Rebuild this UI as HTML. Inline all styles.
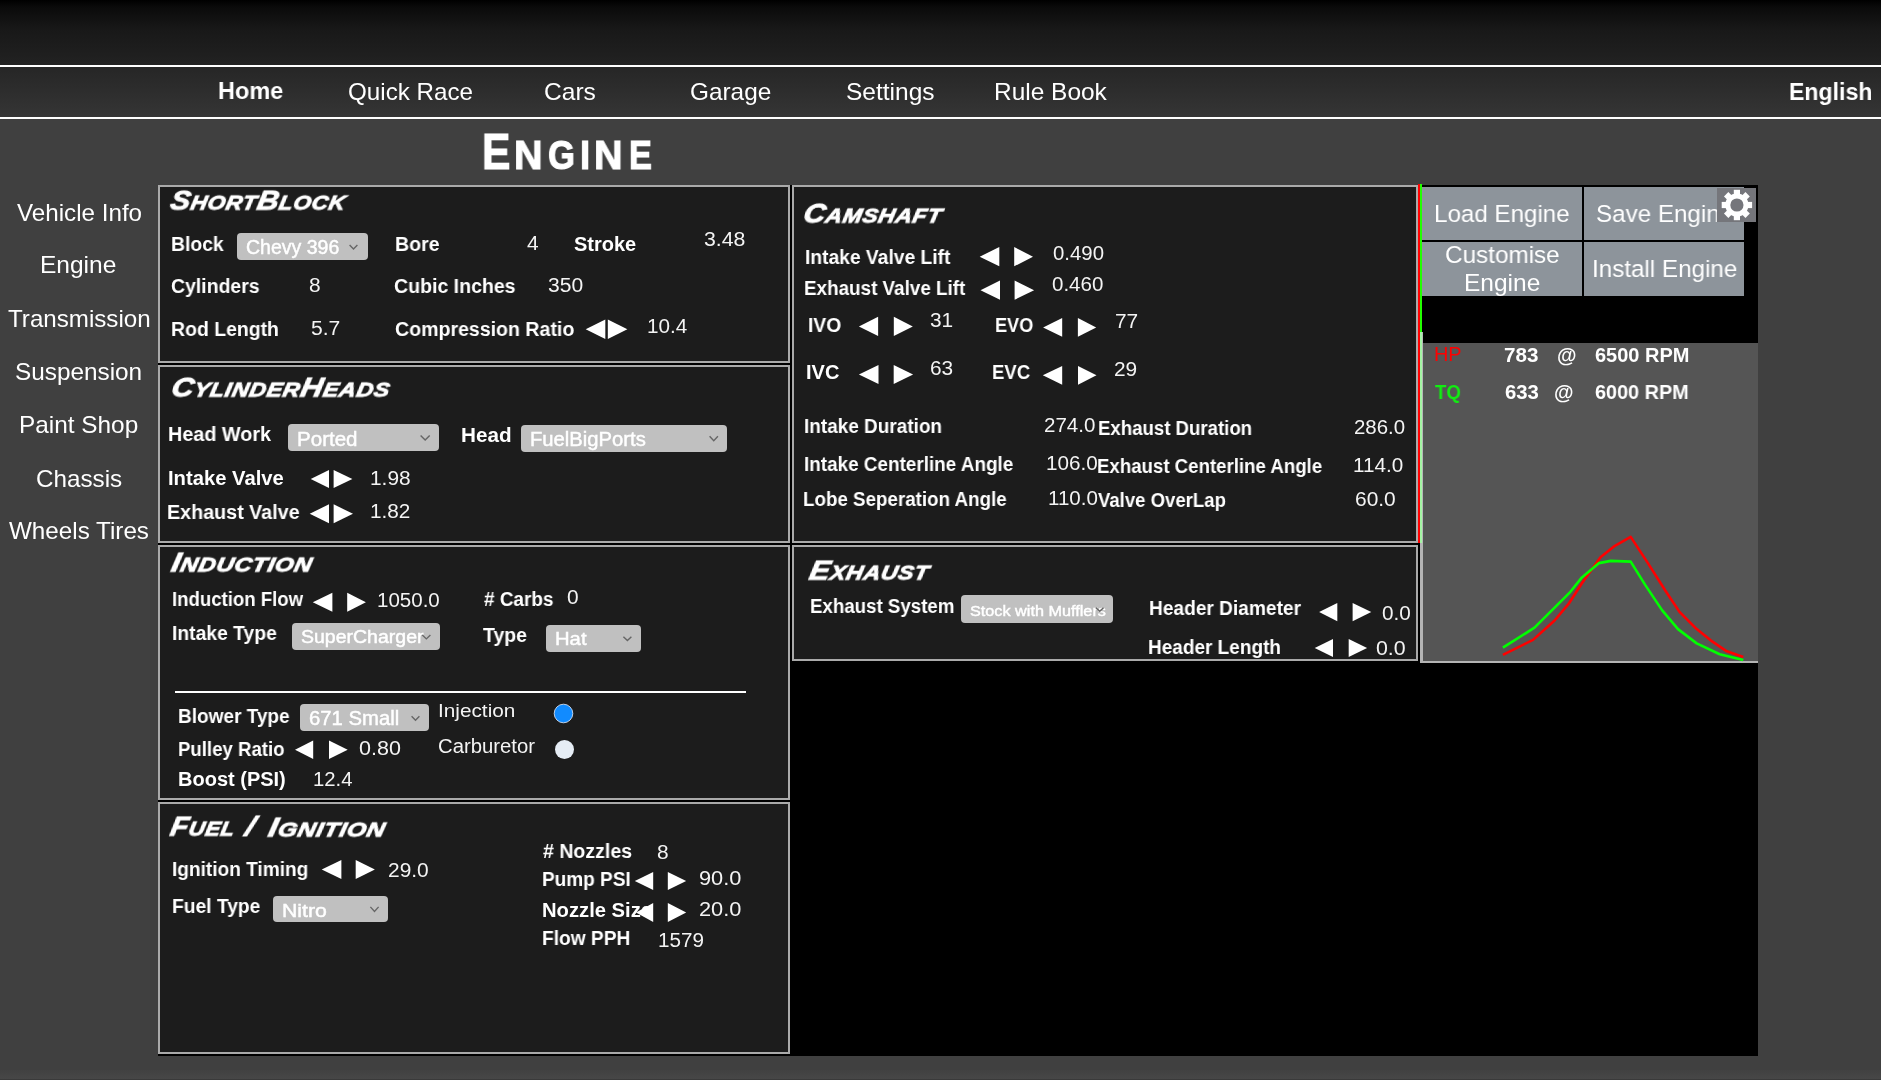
<!DOCTYPE html><html><head><meta charset="utf-8"><style>html,body{margin:0;padding:0;width:1881px;height:1080px;overflow:hidden;background:#404040;}body{position:relative;font-family:'Liberation Sans', sans-serif;}div{box-sizing:border-box;}.t{will-change:transform;white-space:nowrap;position:absolute;}</style></head><body>
<div style="position:absolute;left:0px;top:0px;width:1881px;height:65px;background:linear-gradient(#000000 0%, #0b0b0b 12%, #181818 45%, #222222 100%);"></div>
<div style="position:absolute;left:0px;top:65px;width:1881px;height:2px;background:#ffffff;"></div>
<div style="position:absolute;left:0px;top:67px;width:1881px;height:50px;background:linear-gradient(#262626, #353535);"></div>
<div style="position:absolute;left:0px;top:117px;width:1881px;height:2px;background:#ffffff;"></div>
<div style="position:absolute;left:0px;top:119px;width:1881px;height:961px;background:#404040;"></div>
<div style="position:absolute;left:0px;top:1070px;width:1881px;height:9px;background:linear-gradient(#414141,#474747);"></div>
<div style="position:absolute;left:0px;top:1079px;width:1881px;height:1px;background:#3a3a3a;"></div>
<div style="position:absolute;left:158px;top:185px;width:1600px;height:871px;background:#000000;"></div>
<div style="position:absolute;left:158px;top:185px;width:632px;height:178px;background:#1c1c1c;border:2px solid #aaaaaa;"></div>
<div style="position:absolute;left:158px;top:365px;width:632px;height:178px;background:#1c1c1c;border:2px solid #aaaaaa;"></div>
<div style="position:absolute;left:158px;top:545px;width:632px;height:255px;background:#1c1c1c;border:2px solid #aaaaaa;"></div>
<div style="position:absolute;left:158px;top:802px;width:632px;height:252px;background:#1c1c1c;border:2px solid #aaaaaa;"></div>
<div style="position:absolute;left:792px;top:185px;width:626px;height:358px;background:#1c1c1c;border:2px solid #aaaaaa;"></div>
<div style="position:absolute;left:792px;top:545px;width:626px;height:116px;background:#1c1c1c;border:2px solid #aaaaaa;"></div>
<div style="position:absolute;left:1418px;top:184px;width:2px;height:359px;background:#ff0000;"></div>
<div style="position:absolute;left:1420px;top:184px;width:2px;height:148px;background:#22ff00;"></div>
<div style="position:absolute;left:1420px;top:332px;width:2px;height:211px;background:#a4f5a4;"></div>
<div style="position:absolute;left:1422px;top:187px;width:160px;height:53px;background:#8d949b;"></div>
<div style="position:absolute;left:1584px;top:187px;width:160px;height:53px;background:#8d949b;"></div>
<div style="position:absolute;left:1422px;top:242px;width:160px;height:54px;background:#8d949b;"></div>
<div style="position:absolute;left:1584px;top:242px;width:160px;height:54px;background:#8d949b;"></div>
<div style="position:absolute;left:1423px;top:343px;width:335px;height:318px;background:#555555;"></div>
<div style="position:absolute;left:1422px;top:332px;width:1px;height:211px;background:#b8b8b8;"></div>
<div style="position:absolute;left:1420px;top:543px;width:3px;height:120px;background:#b4b4b4;"></div>
<div style="position:absolute;left:1420px;top:661px;width:338px;height:2px;background:#b4b4b4;"></div>
<div style="position:absolute;left:237px;top:233px;width:131px;height:27px;background:#c0c0c0;border-radius:4px;"></div>
<div style="position:absolute;left:287.8px;top:423.7px;width:151.2px;height:27.400000000000034px;background:#c0c0c0;border-radius:4px;"></div>
<div style="position:absolute;left:521.3px;top:424.7px;width:206.20000000000005px;height:27.19999999999999px;background:#c0c0c0;border-radius:4px;"></div>
<div style="position:absolute;left:292px;top:623px;width:147.89999999999998px;height:27.200000000000045px;background:#c0c0c0;border-radius:4px;"></div>
<div style="position:absolute;left:546.2px;top:624.7px;width:94.79999999999995px;height:27.199999999999932px;background:#c0c0c0;border-radius:4px;"></div>
<div style="position:absolute;left:300px;top:704.3px;width:129px;height:26.700000000000045px;background:#c0c0c0;border-radius:4px;"></div>
<div style="position:absolute;left:273.3px;top:895.6px;width:115.19999999999999px;height:26.899999999999977px;background:#c0c0c0;border-radius:4px;"></div>
<div style="position:absolute;left:961px;top:595.1px;width:152.29999999999995px;height:27.5px;background:#c0c0c0;border-radius:4px;"></div>
<div style="position:absolute;left:175px;top:691px;width:571px;height:2px;background:#ffffff;"></div>
<div class="t" style="left:217.89px;top:79.26px;font-weight:700;font-size:24.5px;line-height:24.5px;color:#ffffff;white-space:nowrap;transform-origin:0 0;transform:scaleX(0.9574)">Home</div>
<div class="t" style="left:347.85px;top:79.68px;font-weight:400;font-size:24px;line-height:24px;color:#ffffff;white-space:nowrap;transform-origin:0 0;transform:scaleX(1.0077)">Quick Race</div>
<div class="t" style="left:544.46px;top:79.68px;font-weight:400;font-size:24px;line-height:24px;color:#ffffff;white-space:nowrap;transform-origin:0 0;transform:scaleX(1.0239)">Cars</div>
<div class="t" style="left:689.78px;top:79.58px;font-weight:400;font-size:24px;line-height:24px;color:#ffffff;white-space:nowrap;transform-origin:0 0;transform:scaleX(1.0154)">Garage</div>
<div class="t" style="left:846.30px;top:79.58px;font-weight:400;font-size:24px;line-height:24px;color:#ffffff;white-space:nowrap;transform-origin:0 0;transform:scaleX(1.0205)">Settings</div>
<div class="t" style="left:993.56px;top:79.58px;font-weight:400;font-size:24px;line-height:24px;color:#ffffff;white-space:nowrap;transform-origin:0 0;transform:scaleX(1.0186)">Rule Book</div>
<div class="t" style="left:1789.21px;top:80.26px;font-weight:700;font-size:24.5px;line-height:24.5px;color:#ffffff;white-space:nowrap;transform-origin:0 0;transform:scaleX(0.9428)">English</div>
<div class="t" style="left:16.74px;top:200.78px;font-weight:400;font-size:24px;line-height:24px;color:#ffffff;white-space:nowrap;transform-origin:0 0;transform:scaleX(1.0078)">Vehicle Info</div>
<div class="t" style="left:40.16px;top:253.38px;font-weight:400;font-size:24px;line-height:24px;color:#ffffff;white-space:nowrap;transform-origin:0 0;transform:scaleX(1.0210)">Engine</div>
<div class="t" style="left:7.61px;top:306.68px;font-weight:400;font-size:24px;line-height:24px;color:#ffffff;white-space:nowrap;transform-origin:0 0;transform:scaleX(1.0059)">Transmission</div>
<div class="t" style="left:15.00px;top:359.68px;font-weight:400;font-size:24px;line-height:24px;color:#ffffff;white-space:nowrap;transform-origin:0 0;transform:scaleX(1.0135)">Suspension</div>
<div class="t" style="left:18.67px;top:413.38px;font-weight:400;font-size:24px;line-height:24px;color:#ffffff;white-space:nowrap;transform-origin:0 0;transform:scaleX(1.0151)">Paint Shop</div>
<div class="t" style="left:35.58px;top:466.68px;font-weight:400;font-size:24px;line-height:24px;color:#ffffff;white-space:nowrap;transform-origin:0 0;transform:scaleX(1.0088)">Chassis</div>
<div class="t" style="left:8.78px;top:519.48px;font-weight:400;font-size:24px;line-height:24px;color:#ffffff;white-space:nowrap;transform-origin:0 0;transform:scaleX(1.0092)">Wheels Tires</div>
<div class="t" style="left:171.04px;top:233.57px;font-weight:700;font-size:20px;line-height:20px;color:#ffffff;white-space:nowrap;transform-origin:0 0;transform:scaleX(0.9681)">Block</div>
<div class="t" style="left:394.73px;top:233.57px;font-weight:700;font-size:20px;line-height:20px;color:#ffffff;white-space:nowrap;transform-origin:0 0;transform:scaleX(0.9772)">Bore</div>
<div class="t" style="left:573.78px;top:233.57px;font-weight:700;font-size:20px;line-height:20px;color:#ffffff;white-space:nowrap;transform-origin:0 0;transform:scaleX(0.9950)">Stroke</div>
<div class="t" style="left:171.33px;top:275.57px;font-weight:700;font-size:20px;line-height:20px;color:#ffffff;white-space:nowrap;transform-origin:0 0;transform:scaleX(0.9719)">Cylinders</div>
<div class="t" style="left:394.22px;top:275.57px;font-weight:700;font-size:20px;line-height:20px;color:#ffffff;white-space:nowrap;transform-origin:0 0;transform:scaleX(0.9767)">Cubic Inches</div>
<div class="t" style="left:171.04px;top:318.67px;font-weight:700;font-size:20px;line-height:20px;color:#ffffff;white-space:nowrap;transform-origin:0 0;transform:scaleX(0.9717)">Rod Length</div>
<div class="t" style="left:395.02px;top:319.47px;font-weight:700;font-size:20px;line-height:20px;color:#ffffff;white-space:nowrap;transform-origin:0 0;transform:scaleX(0.9780)">Compression Ratio</div>
<div class="t" style="left:527.28px;top:233.99px;font-weight:400;font-size:19.5px;line-height:19.5px;color:#f4f4f4;white-space:nowrap;transform-origin:0 0;transform:scaleX(1.0700)">4</div>
<div class="t" style="left:704.33px;top:229.69px;font-weight:400;font-size:19.5px;line-height:19.5px;color:#f4f4f4;white-space:nowrap;transform-origin:0 0;transform:scaleX(1.0904)">3.48</div>
<div class="t" style="left:309.03px;top:275.99px;font-weight:400;font-size:19.5px;line-height:19.5px;color:#f4f4f4;white-space:nowrap;transform-origin:0 0;transform:scaleX(1.0700)">8</div>
<div class="t" style="left:548.14px;top:275.99px;font-weight:400;font-size:19.5px;line-height:19.5px;color:#f4f4f4;white-space:nowrap;transform-origin:0 0;transform:scaleX(1.0801)">350</div>
<div class="t" style="left:310.58px;top:319.09px;font-weight:400;font-size:19.5px;line-height:19.5px;color:#f4f4f4;white-space:nowrap;transform-origin:0 0;transform:scaleX(1.0817)">5.7</div>
<div class="t" style="left:647.49px;top:316.89px;font-weight:400;font-size:19.5px;line-height:19.5px;color:#f4f4f4;white-space:nowrap;transform-origin:0 0;transform:scaleX(1.0608)">10.4</div>
<div class="t" style="left:245.95px;top:238.19px;font-weight:400;font-size:19.5px;-webkit-text-stroke:0.45px #fff;line-height:19.5px;color:#ffffff;white-space:nowrap;transform-origin:0 0;transform:scaleX(1.0000)">Chevy 396</div>
<div class="t" style="left:167.62px;top:424.37px;font-weight:700;font-size:20px;line-height:20px;color:#ffffff;white-space:nowrap;transform-origin:0 0;transform:scaleX(0.9896)">Head Work</div>
<div class="t" style="left:296.70px;top:428.57px;font-weight:400;font-size:20.0px;-webkit-text-stroke:0.45px #fff;line-height:20.0px;color:#ffffff;white-space:nowrap;transform-origin:0 0;transform:scaleX(1.0271)">Ported</div>
<div class="t" style="left:460.76px;top:425.37px;font-weight:700;font-size:20px;line-height:20px;color:#ffffff;white-space:nowrap;transform-origin:0 0;transform:scaleX(1.0329)">Head</div>
<div class="t" style="left:529.72px;top:429.89px;font-weight:400;font-size:19.5px;-webkit-text-stroke:0.45px #fff;line-height:19.5px;color:#ffffff;white-space:nowrap;transform-origin:0 0;transform:scaleX(1.0368)">FuelBigPorts</div>
<div class="t" style="left:167.59px;top:468.37px;font-weight:700;font-size:20px;line-height:20px;color:#ffffff;white-space:nowrap;transform-origin:0 0;transform:scaleX(1.0107)">Intake Valve</div>
<div class="t" style="left:370.37px;top:468.79px;font-weight:400;font-size:19.5px;line-height:19.5px;color:#f4f4f4;white-space:nowrap;transform-origin:0 0;transform:scaleX(1.0702)">1.98</div>
<div class="t" style="left:167.12px;top:502.27px;font-weight:700;font-size:20px;line-height:20px;color:#ffffff;white-space:nowrap;transform-origin:0 0;transform:scaleX(0.9857)">Exhaust Valve</div>
<div class="t" style="left:370.18px;top:501.79px;font-weight:400;font-size:19.5px;line-height:19.5px;color:#f4f4f4;white-space:nowrap;transform-origin:0 0;transform:scaleX(1.0633)">1.82</div>
<div class="t" style="left:171.99px;top:588.57px;font-weight:700;font-size:20px;line-height:20px;color:#ffffff;white-space:nowrap;transform-origin:0 0;transform:scaleX(0.9294)">Induction Flow</div>
<div class="t" style="left:376.70px;top:591.49px;font-weight:400;font-size:19.5px;line-height:19.5px;color:#f4f4f4;white-space:nowrap;transform-origin:0 0;transform:scaleX(1.0526)">1050.0</div>
<div class="t" style="left:483.72px;top:588.57px;font-weight:700;font-size:20px;line-height:20px;color:#ffffff;white-space:nowrap;transform-origin:0 0;transform:scaleX(0.9466)"># Carbs</div>
<div class="t" style="left:566.50px;top:588.09px;font-weight:400;font-size:19.5px;line-height:19.5px;color:#f4f4f4;white-space:nowrap;transform-origin:0 0;transform:scaleX(1.0700)">0</div>
<div class="t" style="left:171.95px;top:623.07px;font-weight:700;font-size:20px;line-height:20px;color:#ffffff;white-space:nowrap;transform-origin:0 0;transform:scaleX(0.9654)">Intake Type</div>
<div class="t" style="left:300.83px;top:628.79px;font-weight:400;font-size:17.5px;-webkit-text-stroke:0.45px #fff;line-height:17.5px;color:#ffffff;white-space:nowrap;transform-origin:0 0;transform:scaleX(1.1142)">SuperCharger</div>
<div class="t" style="left:482.72px;top:624.77px;font-weight:700;font-size:20px;line-height:20px;color:#ffffff;white-space:nowrap;transform-origin:0 0;transform:scaleX(0.9741)">Type</div>
<div class="t" style="left:554.79px;top:630.14px;font-weight:400;font-size:18.5px;-webkit-text-stroke:0.45px #fff;line-height:18.5px;color:#ffffff;white-space:nowrap;transform-origin:0 0;transform:scaleX(1.0944)">Hat</div>
<div class="t" style="left:177.87px;top:706.47px;font-weight:700;font-size:20px;line-height:20px;color:#ffffff;white-space:nowrap;transform-origin:0 0;transform:scaleX(0.9509)">Blower Type</div>
<div class="t" style="left:309.05px;top:708.37px;font-weight:400;font-size:20.0px;-webkit-text-stroke:0.45px #fff;line-height:20.0px;color:#ffffff;white-space:nowrap;transform-origin:0 0;transform:scaleX(1.0146)">671 Small</div>
<div class="t" style="left:438.16px;top:702.44px;font-weight:400;font-size:18.5px;line-height:18.5px;color:#f4f4f4;white-space:nowrap;transform-origin:0 0;transform:scaleX(1.1227)">Injection</div>
<div class="t" style="left:177.89px;top:738.77px;font-weight:700;font-size:20px;line-height:20px;color:#ffffff;white-space:nowrap;transform-origin:0 0;transform:scaleX(0.9306)">Pulley Ratio</div>
<div class="t" style="left:358.58px;top:739.19px;font-weight:400;font-size:19.5px;line-height:19.5px;color:#f4f4f4;white-space:nowrap;transform-origin:0 0;transform:scaleX(1.1033)">0.80</div>
<div class="t" style="left:437.74px;top:736.79px;font-weight:400;font-size:19.5px;line-height:19.5px;color:#f4f4f4;white-space:nowrap;transform-origin:0 0;transform:scaleX(1.0402)">Carburetor</div>
<div class="t" style="left:177.80px;top:769.37px;font-weight:700;font-size:20px;line-height:20px;color:#ffffff;white-space:nowrap;transform-origin:0 0;transform:scaleX(0.9981)">Boost (PSI)</div>
<div class="t" style="left:313.41px;top:769.79px;font-weight:400;font-size:19.5px;line-height:19.5px;color:#f4f4f4;white-space:nowrap;transform-origin:0 0;transform:scaleX(1.0413)">12.4</div>
<div class="t" style="left:171.96px;top:859.27px;font-weight:700;font-size:20px;line-height:20px;color:#ffffff;white-space:nowrap;transform-origin:0 0;transform:scaleX(0.9533)">Ignition Timing</div>
<div class="t" style="left:388.13px;top:861.39px;font-weight:400;font-size:19.5px;line-height:19.5px;color:#f4f4f4;white-space:nowrap;transform-origin:0 0;transform:scaleX(1.0722)">29.0</div>
<div class="t" style="left:171.95px;top:895.67px;font-weight:700;font-size:20px;line-height:20px;color:#ffffff;white-space:nowrap;transform-origin:0 0;transform:scaleX(0.9610)">Fuel Type</div>
<div class="t" style="left:282.33px;top:901.12px;font-weight:400;font-size:19.0px;-webkit-text-stroke:0.45px #fff;line-height:19.0px;color:#ffffff;white-space:nowrap;transform-origin:0 0;transform:scaleX(1.1198)">Nitro</div>
<div class="t" style="left:542.61px;top:840.67px;font-weight:700;font-size:20px;line-height:20px;color:#ffffff;white-space:nowrap;transform-origin:0 0;transform:scaleX(0.9777)"># Nozzles</div>
<div class="t" style="left:657.43px;top:842.89px;font-weight:400;font-size:19.5px;line-height:19.5px;color:#f4f4f4;white-space:nowrap;transform-origin:0 0;transform:scaleX(1.0700)">8</div>
<div class="t" style="left:541.67px;top:868.77px;font-weight:700;font-size:20px;line-height:20px;color:#ffffff;white-space:nowrap;transform-origin:0 0;transform:scaleX(0.9507)">Pump PSI</div>
<div class="t" style="left:699.28px;top:869.19px;font-weight:400;font-size:19.5px;line-height:19.5px;color:#f4f4f4;white-space:nowrap;transform-origin:0 0;transform:scaleX(1.1167)">90.0</div>
<div class="t" style="left:541.59px;top:899.87px;font-weight:700;font-size:20px;line-height:20px;color:#ffffff;white-space:nowrap;transform-origin:0 0;transform:scaleX(1.0103)">Nozzle Size</div>
<div class="t" style="left:699.28px;top:900.29px;font-weight:400;font-size:19.5px;line-height:19.5px;color:#f4f4f4;white-space:nowrap;transform-origin:0 0;transform:scaleX(1.1167)">20.0</div>
<div class="t" style="left:541.66px;top:927.87px;font-weight:700;font-size:20px;line-height:20px;color:#ffffff;white-space:nowrap;transform-origin:0 0;transform:scaleX(0.9579)">Flow PPH</div>
<div class="t" style="left:657.69px;top:930.89px;font-weight:400;font-size:19.5px;line-height:19.5px;color:#f4f4f4;white-space:nowrap;transform-origin:0 0;transform:scaleX(1.0605)">1579</div>
<div class="t" style="left:805.45px;top:246.67px;font-weight:700;font-size:20px;line-height:20px;color:#ffffff;white-space:nowrap;transform-origin:0 0;transform:scaleX(0.9623)">Intake Valve Lift</div>
<div class="t" style="left:1052.72px;top:244.19px;font-weight:400;font-size:19.5px;line-height:19.5px;color:#f4f4f4;white-space:nowrap;transform-origin:0 0;transform:scaleX(1.0454)">0.490</div>
<div class="t" style="left:803.98px;top:277.77px;font-weight:700;font-size:20px;line-height:20px;color:#ffffff;white-space:nowrap;transform-origin:0 0;transform:scaleX(0.9426)">Exhaust Valve Lift</div>
<div class="t" style="left:1051.92px;top:274.79px;font-weight:400;font-size:19.5px;line-height:19.5px;color:#f4f4f4;white-space:nowrap;transform-origin:0 0;transform:scaleX(1.0517)">0.460</div>
<div class="t" style="left:808.45px;top:315.27px;font-weight:700;font-size:20px;line-height:20px;color:#ffffff;white-space:nowrap;transform-origin:0 0;transform:scaleX(0.9626)">IVO</div>
<div class="t" style="left:929.95px;top:311.39px;font-weight:400;font-size:19.5px;line-height:19.5px;color:#f4f4f4;white-space:nowrap;transform-origin:0 0;transform:scaleX(1.0700)">31</div>
<div class="t" style="left:995.02px;top:314.67px;font-weight:700;font-size:20px;line-height:20px;color:#ffffff;white-space:nowrap;transform-origin:0 0;transform:scaleX(0.9059)">EVO</div>
<div class="t" style="left:1114.63px;top:312.29px;font-weight:400;font-size:19.5px;line-height:19.5px;color:#f4f4f4;white-space:nowrap;transform-origin:0 0;transform:scaleX(1.0700)">77</div>
<div class="t" style="left:805.72px;top:361.97px;font-weight:700;font-size:20px;line-height:20px;color:#ffffff;white-space:nowrap;transform-origin:0 0;transform:scaleX(0.9854)">IVC</div>
<div class="t" style="left:930.01px;top:359.09px;font-weight:400;font-size:19.5px;line-height:19.5px;color:#f4f4f4;white-space:nowrap;transform-origin:0 0;transform:scaleX(1.0700)">63</div>
<div class="t" style="left:991.70px;top:361.57px;font-weight:700;font-size:20px;line-height:20px;color:#ffffff;white-space:nowrap;transform-origin:0 0;transform:scaleX(0.9280)">EVC</div>
<div class="t" style="left:1114.43px;top:360.49px;font-weight:400;font-size:19.5px;line-height:19.5px;color:#f4f4f4;white-space:nowrap;transform-origin:0 0;transform:scaleX(1.0700)">29</div>
<div class="t" style="left:804.27px;top:416.07px;font-weight:700;font-size:20px;line-height:20px;color:#ffffff;white-space:nowrap;transform-origin:0 0;transform:scaleX(0.9483)">Intake Duration</div>
<div class="t" style="left:1044.25px;top:416.09px;font-weight:400;font-size:19.5px;line-height:19.5px;color:#f4f4f4;white-space:nowrap;transform-origin:0 0;transform:scaleX(1.0532)">274.0</div>
<div class="t" style="left:1098.29px;top:417.77px;font-weight:700;font-size:20px;line-height:20px;color:#ffffff;white-space:nowrap;transform-origin:0 0;transform:scaleX(0.9307)">Exhaust Duration</div>
<div class="t" style="left:1353.65px;top:417.69px;font-weight:400;font-size:19.5px;line-height:19.5px;color:#f4f4f4;white-space:nowrap;transform-origin:0 0;transform:scaleX(1.0468)">286.0</div>
<div class="t" style="left:804.27px;top:454.17px;font-weight:700;font-size:20px;line-height:20px;color:#ffffff;white-space:nowrap;transform-origin:0 0;transform:scaleX(0.9445)">Intake Centerline Angle</div>
<div class="t" style="left:1045.69px;top:454.09px;font-weight:400;font-size:19.5px;line-height:19.5px;color:#f4f4f4;white-space:nowrap;transform-origin:0 0;transform:scaleX(1.0607)">106.0</div>
<div class="t" style="left:1097.39px;top:455.87px;font-weight:700;font-size:20px;line-height:20px;color:#ffffff;white-space:nowrap;transform-origin:0 0;transform:scaleX(0.9320)">Exhaust Centerline Angle</div>
<div class="t" style="left:1353.19px;top:455.79px;font-weight:400;font-size:19.5px;line-height:19.5px;color:#f4f4f4;white-space:nowrap;transform-origin:0 0;transform:scaleX(1.0607)">114.0</div>
<div class="t" style="left:803.38px;top:488.77px;font-weight:700;font-size:20px;line-height:20px;color:#ffffff;white-space:nowrap;transform-origin:0 0;transform:scaleX(0.9380)">Lobe Seperation Angle</div>
<div class="t" style="left:1047.50px;top:489.19px;font-weight:400;font-size:19.5px;line-height:19.5px;color:#f4f4f4;white-space:nowrap;transform-origin:0 0;transform:scaleX(1.0541)">110.0</div>
<div class="t" style="left:1098.34px;top:490.07px;font-weight:700;font-size:20px;line-height:20px;color:#ffffff;white-space:nowrap;transform-origin:0 0;transform:scaleX(0.9274)">Valve OverLap</div>
<div class="t" style="left:1354.91px;top:490.49px;font-weight:400;font-size:19.5px;line-height:19.5px;color:#f4f4f4;white-space:nowrap;transform-origin:0 0;transform:scaleX(1.0727)">60.0</div>
<div class="t" style="left:809.89px;top:595.87px;font-weight:700;font-size:20px;line-height:20px;color:#ffffff;white-space:nowrap;transform-origin:0 0;transform:scaleX(0.9345)">Exhaust System</div>
<div class="t" style="left:970.07px;top:602.58px;font-weight:400;font-size:15.5px;-webkit-text-stroke:0.45px #fff;line-height:15.5px;color:#ffffff;white-space:nowrap;transform-origin:0 0;transform:scaleX(1.0471)">Stock with Mufflers</div>
<div class="t" style="left:1148.76px;top:597.97px;font-weight:700;font-size:20px;line-height:20px;color:#ffffff;white-space:nowrap;transform-origin:0 0;transform:scaleX(0.9563)">Header Diameter</div>
<div class="t" style="left:1382.31px;top:603.79px;font-weight:400;font-size:19.5px;line-height:19.5px;color:#f4f4f4;white-space:nowrap;transform-origin:0 0;transform:scaleX(1.0627)">0.0</div>
<div class="t" style="left:1148.47px;top:637.07px;font-weight:700;font-size:20px;line-height:20px;color:#ffffff;white-space:nowrap;transform-origin:0 0;transform:scaleX(0.9493)">Header Length</div>
<div class="t" style="left:1376.38px;top:639.49px;font-weight:400;font-size:19.5px;line-height:19.5px;color:#f4f4f4;white-space:nowrap;transform-origin:0 0;transform:scaleX(1.0939)">0.0</div>
<div class="t" style="left:1434.12px;top:201.76px;font-weight:400;font-size:24.5px;line-height:24.5px;color:#ffffff;white-space:nowrap;transform-origin:0 0;transform:scaleX(0.9856)">Load Engine</div>
<div class="t" style="left:1595.71px;top:202.06px;font-weight:400;font-size:24.5px;line-height:24.5px;color:#ffffff;white-space:nowrap;transform-origin:0 0;transform:scaleX(0.9870)">Save Engine</div>
<div class="t" style="left:1445.07px;top:242.96px;font-weight:400;font-size:24.5px;line-height:24.5px;color:#ffffff;white-space:nowrap;transform-origin:0 0;transform:scaleX(0.9911)">Customise</div>
<div class="t" style="left:1464.00px;top:270.56px;font-weight:400;font-size:24.5px;line-height:24.5px;color:#ffffff;white-space:nowrap;transform-origin:0 0;transform:scaleX(0.9946)">Engine</div>
<div class="t" style="left:1591.50px;top:256.66px;font-weight:400;font-size:24.5px;line-height:24.5px;color:#ffffff;white-space:nowrap;transform-origin:0 0;transform:scaleX(0.9878)">Install Engine</div>
<div class="t" style="left:1433.64px;top:345.29px;font-weight:400;font-size:19.5px;line-height:19.5px;color:#ff0000;white-space:nowrap;transform-origin:0 0;transform:scaleX(1.0202)">HP</div>
<div class="t" style="left:1503.67px;top:345.07px;font-weight:700;font-size:20px;line-height:20px;color:#ffffff;white-space:nowrap;transform-origin:0 0;transform:scaleX(1.0310)">783</div>
<div class="t" style="left:1556.55px;top:345.07px;font-weight:700;font-size:20px;line-height:20px;color:#ffffff;white-space:nowrap;transform-origin:0 0;transform:scaleX(1.0000)">@</div>
<div class="t" style="left:1594.99px;top:345.07px;font-weight:700;font-size:20px;line-height:20px;color:#ffffff;white-space:nowrap;transform-origin:0 0;transform:scaleX(0.9990)">6500 RPM</div>
<div class="t" style="left:1435.03px;top:382.27px;font-weight:700;font-size:20px;line-height:20px;color:#11ee11;white-space:nowrap;transform-origin:0 0;transform:scaleX(0.9314)">TQ</div>
<div class="t" style="left:1504.58px;top:382.27px;font-weight:700;font-size:20px;line-height:20px;color:#ffffff;white-space:nowrap;transform-origin:0 0;transform:scaleX(1.0154)">633</div>
<div class="t" style="left:1553.55px;top:382.27px;font-weight:700;font-size:20px;line-height:20px;color:#ffffff;white-space:nowrap;transform-origin:0 0;transform:scaleX(1.0000)">@</div>
<div class="t" style="left:1595.00px;top:382.27px;font-weight:700;font-size:20px;line-height:20px;color:#ffffff;white-space:nowrap;transform-origin:0 0;transform:scaleX(0.9925)">6000 RPM</div>
<div class="t" style="left:168.88px;top:188.14px;font-family:'Liberation Sans', sans-serif;font-weight:700;font-style:italic;letter-spacing:0.6px;line-height:27px;-webkit-text-stroke:0.9px #fff;transform-origin:0 22.86px;color:#fff;white-space:nowrap;transform:scaleX(1.0998) skewX(-10deg)"><span style="font-size:27px">S</span><span style="font-size:20.5px">H</span><span style="font-size:20.5px">O</span><span style="font-size:20.5px">R</span><span style="font-size:20.5px">T</span><span style="font-size:27px">B</span><span style="font-size:20.5px">L</span><span style="font-size:20.5px">O</span><span style="font-size:20.5px">C</span><span style="font-size:20.5px">K</span></div>
<div class="t" style="left:169.54px;top:374.64px;font-family:'Liberation Sans', sans-serif;font-weight:700;font-style:italic;letter-spacing:0.6px;line-height:27px;-webkit-text-stroke:0.9px #fff;transform-origin:0 22.86px;color:#fff;white-space:nowrap;transform:scaleX(1.1284) skewX(-10deg)"><span style="font-size:27px">C</span><span style="font-size:20.5px">Y</span><span style="font-size:20.5px">L</span><span style="font-size:20.5px">I</span><span style="font-size:20.5px">N</span><span style="font-size:20.5px">D</span><span style="font-size:20.5px">E</span><span style="font-size:20.5px">R</span><span style="font-size:27px">H</span><span style="font-size:20.5px">E</span><span style="font-size:20.5px">A</span><span style="font-size:20.5px">D</span><span style="font-size:20.5px">S</span></div>
<div class="t" style="left:169.57px;top:549.44px;font-family:'Liberation Sans', sans-serif;font-weight:700;font-style:italic;letter-spacing:0.6px;line-height:27px;-webkit-text-stroke:0.9px #fff;transform-origin:0 22.86px;color:#fff;white-space:nowrap;transform:scaleX(1.1644) skewX(-10deg)"><span style="font-size:27px">I</span><span style="font-size:20.5px">N</span><span style="font-size:20.5px">D</span><span style="font-size:20.5px">U</span><span style="font-size:20.5px">C</span><span style="font-size:20.5px">T</span><span style="font-size:20.5px">I</span><span style="font-size:20.5px">O</span><span style="font-size:20.5px">N</span></div>
<div class="t" style="left:169.22px;top:813.74px;font-family:'Liberation Sans', sans-serif;font-weight:700;font-style:italic;letter-spacing:0.6px;line-height:27px;-webkit-text-stroke:0.9px #fff;transform-origin:0 22.86px;color:#fff;white-space:nowrap;transform:scaleX(1.0787) skewX(-10deg)"><span style="font-size:27px">F</span><span style="font-size:20.5px">U</span><span style="font-size:20.5px">E</span><span style="font-size:20.5px">L</span></div>
<div class="t" style="left:243.50px;top:813.74px;font-family:'Liberation Sans', sans-serif;font-weight:700;font-style:italic;letter-spacing:0.6px;line-height:27px;-webkit-text-stroke:0.9px #fff;transform-origin:0 22.86px;color:#fff;white-space:nowrap;transform:scaleX(1.1588) skewX(-10deg)"><span style="font-size:27px">/</span></div>
<div class="t" style="left:266.56px;top:813.74px;font-family:'Liberation Sans', sans-serif;font-weight:700;font-style:italic;letter-spacing:0.6px;line-height:27px;-webkit-text-stroke:0.9px #fff;transform-origin:0 22.86px;color:#fff;white-space:nowrap;transform:scaleX(1.1977) skewX(-10deg)"><span style="font-size:27px">I</span><span style="font-size:20.5px">G</span><span style="font-size:20.5px">N</span><span style="font-size:20.5px">I</span><span style="font-size:20.5px">T</span><span style="font-size:20.5px">I</span><span style="font-size:20.5px">O</span><span style="font-size:20.5px">N</span></div>
<div class="t" style="left:802.08px;top:201.24px;font-family:'Liberation Sans', sans-serif;font-weight:700;font-style:italic;letter-spacing:0.6px;line-height:27px;-webkit-text-stroke:0.9px #fff;transform-origin:0 22.86px;color:#fff;white-space:nowrap;transform:scaleX(1.1123) skewX(-10deg)"><span style="font-size:27px">C</span><span style="font-size:20.5px">A</span><span style="font-size:20.5px">M</span><span style="font-size:20.5px">S</span><span style="font-size:20.5px">H</span><span style="font-size:20.5px">A</span><span style="font-size:20.5px">F</span><span style="font-size:20.5px">T</span></div>
<div class="t" style="left:807.99px;top:557.94px;font-family:'Liberation Sans', sans-serif;font-weight:700;font-style:italic;letter-spacing:0.6px;line-height:27px;-webkit-text-stroke:0.9px #fff;transform-origin:0 22.86px;color:#fff;white-space:nowrap;transform:scaleX(1.1243) skewX(-10deg)"><span style="font-size:27px">E</span><span style="font-size:20.5px">X</span><span style="font-size:20.5px">H</span><span style="font-size:20.5px">A</span><span style="font-size:20.5px">U</span><span style="font-size:20.5px">S</span><span style="font-size:20.5px">T</span></div>
<div class="t" style="left:481.51px;top:126.74px;font-weight:700;font-size:50.4px;line-height:50.4px;-webkit-text-stroke:1.2px #fff;color:#fff;transform-origin:0 0;transform:scaleX(0.8450)">E</div>
<div class="t" style="left:513.69px;top:134.86px;font-weight:700;font-size:40.8px;line-height:40.8px;-webkit-text-stroke:1.2px #fff;color:#fff;transform-origin:0 0;transform:scaleX(0.9682)">N</div>
<div class="t" style="left:547.81px;top:135.46px;font-weight:700;font-size:40.8px;line-height:40.8px;-webkit-text-stroke:1.2px #fff;color:#fff;transform-origin:0 0;transform:scaleX(0.8465)">G</div>
<div class="t" style="left:579.75px;top:134.86px;font-weight:700;font-size:40.8px;line-height:40.8px;-webkit-text-stroke:1.2px #fff;color:#fff;transform-origin:0 0;transform:scaleX(0.8899)">I</div>
<div class="t" style="left:594.49px;top:134.86px;font-weight:700;font-size:40.8px;line-height:40.8px;-webkit-text-stroke:1.2px #fff;color:#fff;transform-origin:0 0;transform:scaleX(0.9682)">N</div>
<div class="t" style="left:628.76px;top:134.86px;font-weight:700;font-size:40.8px;line-height:40.8px;-webkit-text-stroke:1.2px #fff;color:#fff;transform-origin:0 0;transform:scaleX(0.8386)">E</div>
<svg style="position:absolute;left:0;top:0" width="1881" height="1080" viewBox="0 0 1881 1080">
<polygon points="605.3,319.4 605.3,339 585.7,329.2" fill="#fff"/>
<polygon points="607.8,319.4 607.8,339 627.4,329.2" fill="#fff"/>
<polygon points="329,470 329,488.1 310.7,479.05" fill="#fff"/>
<polygon points="333.6,470 333.6,488.1 352.4,479.05" fill="#fff"/>
<polygon points="329,504.3 329,523.3 309.7,513.8" fill="#fff"/>
<polygon points="333.6,504.3 333.6,523.3 353,513.8" fill="#fff"/>
<polygon points="332.4,592.7 332.4,611.8 312.8,602.25" fill="#fff"/>
<polygon points="347.2,592.7 347.2,611.8 365.9,602.25" fill="#fff"/>
<polygon points="313.2,740.4 313.2,759.1 295,749.75" fill="#fff"/>
<polygon points="329,740.4 329,759.1 347.7,749.75" fill="#fff"/>
<polygon points="341.4,859.9 341.4,879.1 321.7,869.5" fill="#fff"/>
<polygon points="355.7,859.9 355.7,879.1 374.9,869.5" fill="#fff"/>
<polygon points="653.2,871.9 653.2,890 634.8,880.95" fill="#fff"/>
<polygon points="667.8,871.9 667.8,890 686.2,880.95" fill="#fff"/>
<polygon points="653.2,902.9 653.2,921.9 636,912.4" fill="#fff"/>
<polygon points="667.8,902.9 667.8,921.9 686.2,912.4" fill="#fff"/>
<polygon points="999.3,247.1 999.3,266.3 979.7,256.7" fill="#fff"/>
<polygon points="1014.2,247.1 1014.2,266.3 1033,256.7" fill="#fff"/>
<polygon points="1000,280.6 1000,299.8 980.5,290.20000000000005" fill="#fff"/>
<polygon points="1014.6,280.6 1014.6,299.8 1034.1,290.20000000000005" fill="#fff"/>
<polygon points="878.1,316.8 878.1,336 858.9,326.4" fill="#fff"/>
<polygon points="893.8,316.8 893.8,336 912.8,326.4" fill="#fff"/>
<polygon points="1062.2,318 1062.2,336.8 1043.1,327.4" fill="#fff"/>
<polygon points="1077.9,318 1077.9,336.8 1096.2,327.4" fill="#fff"/>
<polygon points="878.5,365 878.5,384.1 858.9,374.55" fill="#fff"/>
<polygon points="893.7,365 893.7,384.1 913.1,374.55" fill="#fff"/>
<polygon points="1062.2,365.9 1062.2,384.8 1042.8,375.35" fill="#fff"/>
<polygon points="1078,365.9 1078,384.8 1096.5,375.35" fill="#fff"/>
<polygon points="1337.3,602.9 1337.3,621.3 1319.1,612.0999999999999" fill="#fff"/>
<polygon points="1352.6,602.9 1352.6,621.3 1371.3,612.0999999999999" fill="#fff"/>
<polygon points="1333,639 1333,657 1314.7,648.0" fill="#fff"/>
<polygon points="1348.7,639 1348.7,657 1367.1,648.0" fill="#fff"/>
<polyline points="349.6,245.1 353.5,249.0 357.4,245.1" fill="none" stroke="#666666" stroke-width="1.4"/>
<polyline points="420.6,435.40000000000003 425.15,440.0 429.7,435.40000000000003" fill="none" stroke="#666666" stroke-width="1.4"/>
<polyline points="709.6,436.20000000000005 713.75,440.7 717.9,436.20000000000005" fill="none" stroke="#666666" stroke-width="1.4"/>
<polyline points="422.3,635.0 426.35,638.9 430.4,635.0" fill="none" stroke="#666666" stroke-width="1.4"/>
<polyline points="623.4,636.7 627.4,640.6 631.4,636.7" fill="none" stroke="#666666" stroke-width="1.4"/>
<polyline points="411.6,716.3000000000001 415.5,720.1999999999999 419.4,716.3000000000001" fill="none" stroke="#666666" stroke-width="1.4"/>
<polyline points="370.40000000000003,906.9 374.5,911.4 378.59999999999997,906.9" fill="none" stroke="#666666" stroke-width="1.4"/>
<polyline points="1096.0,607.7 1099.75,611.3 1103.5,607.7" fill="none" stroke="#666666" stroke-width="1.4"/>
<circle cx="563.5" cy="713.5" r="9.3" fill="#118bff" stroke="#e8f0ff" stroke-width="0.8"/>
<circle cx="564.5" cy="749.5" r="9.5" fill="#e6edf5"/>
<polyline points="1502.9,654.9 1533,639.9 1554.6,620.5 1569,603.3 1581.9,583.2 1600.5,557.3 1614.9,545.8 1630.7,536.9 1647.9,563.1 1665.1,590.3 1679.5,611.9 1696.7,629.1 1711,640.6 1726.8,651.3 1743.3,657.1" fill="none" stroke="#ff0000" stroke-width="2.6" stroke-linejoin="round"/>
<polyline points="1502.9,647.7 1534.5,627.7 1554.6,607.6 1570.4,591.8 1581.9,577.4 1599.1,563.1 1610.6,560.9 1630.7,561.6 1645,584.6 1662.2,610.4 1678,629.1 1696.7,643.4 1719.7,654.2 1743.3,660" fill="none" stroke="#00ff00" stroke-width="2.6" stroke-linejoin="round"/>
</svg>
<div style="position:absolute;left:1717.3px;top:187.8px;width:38.5px;height:33.89999999999998px;background:#75767b;"></div>
<svg style="position:absolute;left:1717px;top:188px" width="39" height="34" viewBox="1717 188 39 34">
<circle cx="1736.9" cy="205.0" r="11.6" fill="#fff"/>
<rect x="1733.8000000000002" y="189.8" width="6.2" height="8" fill="#fff" transform="rotate(0 1736.9 205.0)"/>
<rect x="1733.8000000000002" y="189.8" width="6.2" height="8" fill="#fff" transform="rotate(45 1736.9 205.0)"/>
<rect x="1733.8000000000002" y="189.8" width="6.2" height="8" fill="#fff" transform="rotate(90 1736.9 205.0)"/>
<rect x="1733.8000000000002" y="189.8" width="6.2" height="8" fill="#fff" transform="rotate(135 1736.9 205.0)"/>
<rect x="1733.8000000000002" y="189.8" width="6.2" height="8" fill="#fff" transform="rotate(180 1736.9 205.0)"/>
<rect x="1733.8000000000002" y="189.8" width="6.2" height="8" fill="#fff" transform="rotate(225 1736.9 205.0)"/>
<rect x="1733.8000000000002" y="189.8" width="6.2" height="8" fill="#fff" transform="rotate(270 1736.9 205.0)"/>
<rect x="1733.8000000000002" y="189.8" width="6.2" height="8" fill="#fff" transform="rotate(315 1736.9 205.0)"/>
<circle cx="1736.9" cy="205.0" r="6.6" fill="#75767b"/>
</svg>
</body></html>
